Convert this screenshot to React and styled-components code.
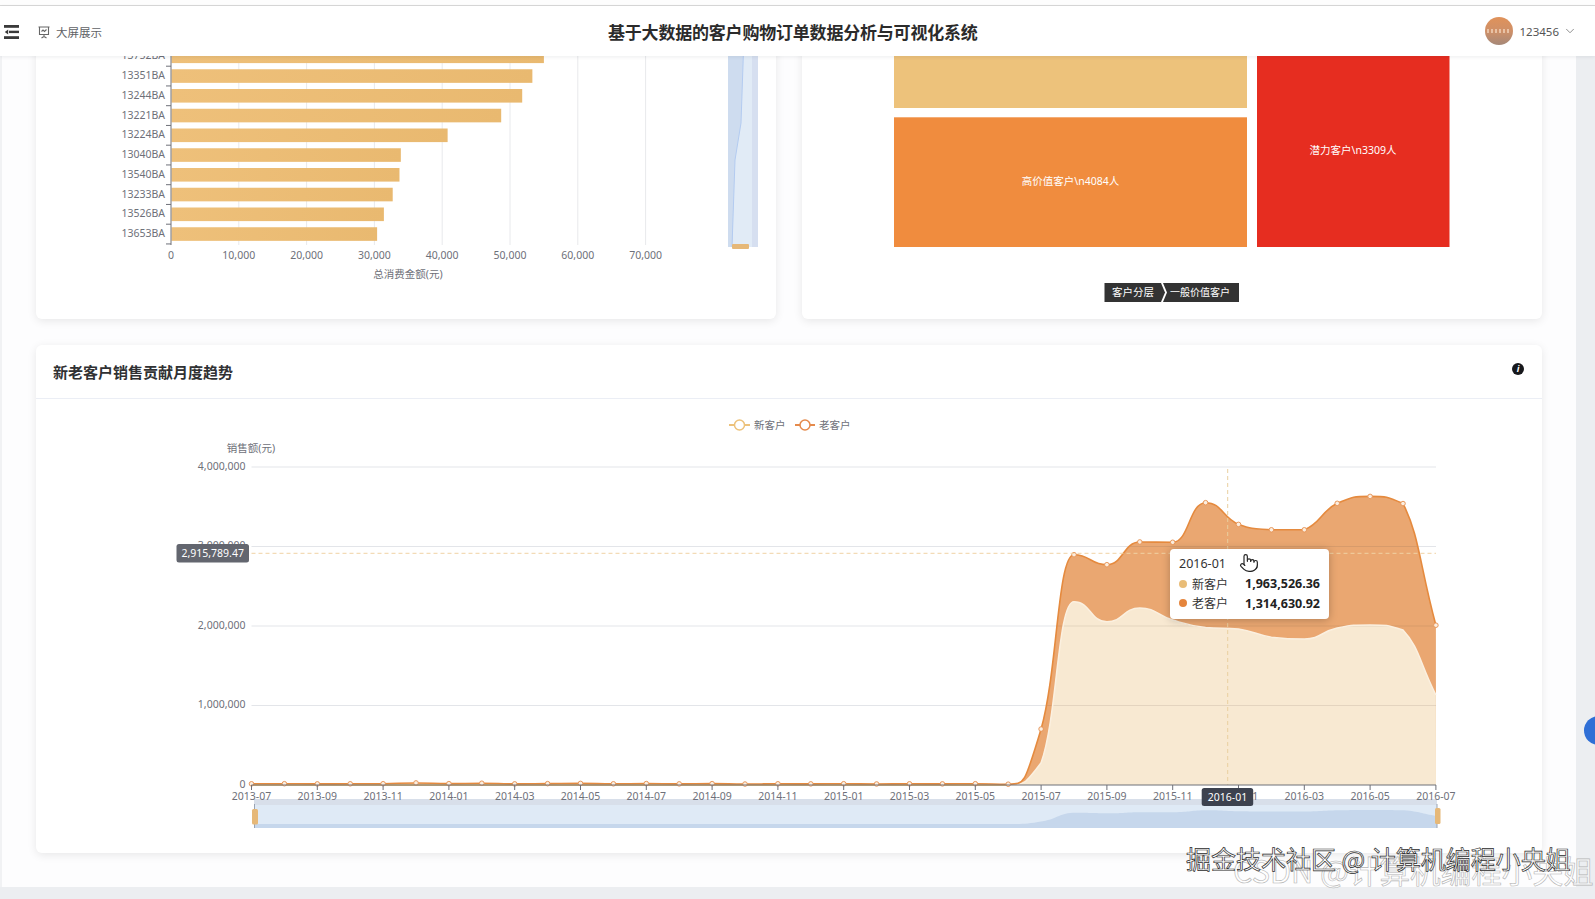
import React from 'react'
import styled, { createGlobalStyle } from 'styled-components'
import { ChevronDown, Pointer } from 'lucide-react'

const GlobalStyle = createGlobalStyle`
  html, body {
    margin: 0;
    padding: 0;
    background: #eceef1;
  }
  * {
    box-sizing: border-box;
  }
  body {
    font-family: "Noto Sans", "Noto Sans CJK SC", sans-serif;
    color: #303133;
  }
`

const Page = styled.div`
  position: relative;
  width: 1595px;
  height: 899px;
  overflow: hidden;
  background: #eceef1;
  display: flex;
  flex-direction: column;
`

const TopStrip = styled.div`
  height: 6px;
  background: #fdfdfd;
  border-bottom: 1px solid #d9d9d9;
`

const Header = styled.header`
  position: relative;
  z-index: 2;
  height: 50px;
  background: #fff;
  box-shadow: 0 1px 4px rgba(0, 21, 41, 0.08);
  display: grid;
  grid-template-columns: 608px auto 1fr;
  align-items: center;
`

const HeaderLeft = styled.div`
  display: flex;
  align-items: center;
  padding: 2px 0 0 4px;
`

const Present = styled.div`
  display: flex;
  align-items: center;
  gap: 6px;
  margin-left: 19px;
  font-size: 11.5px;
  color: #606266;
`

const Title = styled.h1`
  margin: 0;
  font-size: 17px;
  letter-spacing: -0.2px;
  font-weight: 700;
  color: #2b2b2b;
`

const UserBox = styled.div`
  display: flex;
  align-items: center;
  justify-content: flex-end;
  padding-right: 18px;
  font-size: 11.5px;
  color: #555;
  svg {
    margin-left: 4px;
    color: #777;
  }
`

const Avatar = styled.div`
  position: relative;
  width: 28px;
  height: 28px;
  margin-right: 7px;
  border-radius: 50%;
  background: linear-gradient(180deg, #e0925a 0%, #cf9068 50%, #a58878 100%);
  &::after {
    content: '';
    position: absolute;
    left: 2px;
    right: 2px;
    top: 12px;
    height: 4px;
    background: repeating-linear-gradient(90deg, rgba(255, 235, 215, 0.55) 0 2px, transparent 2px 4px);
  }
`

const Body = styled.div`
  flex: 1;
  display: flex;
  min-height: 0;
`

const Main = styled.main`
  width: 1576px;
  height: 831px;
  overflow: hidden;
  background: #fdfdfe;
  padding: 0 34px 0 36px;
  border-left: 2px solid #f1f2f4;
`

const Row = styled.div`
  display: grid;
  grid-template-columns: 740px 740px;
  gap: 26px;
  margin-top: -20px;
  margin-left: -2px;
`

const Card = styled.section`
  background: #fff;
  border-radius: 6px;
  box-shadow: 0 2px 10px rgba(0, 0, 0, 0.09);
  height: ${p => p.$height}px;
  overflow: hidden;
`

const WideCard = styled(Card)`
  margin: 26px 0 0 -2px;
  width: 1506px;
`

const CardHead = styled.div`
  height: 54px;
  padding: 0 18px 0 17px;
  border-bottom: 1px solid #ebeef5;
  display: flex;
  align-items: center;
  justify-content: space-between;
`

const CardTitle = styled.h2`
  margin: 0 0 1px;
  font-size: 15px;
  font-weight: 700;
  color: #303133;
`

const InfoDot = styled.span`
  width: 12px;
  height: 12px;
  margin-bottom: 6px;
  border-radius: 50%;
  background: #17181c;
  color: #fff;
  font-size: 9px;
  font-weight: 700;
  font-style: italic;
  line-height: 12px;
  text-align: center;
`

const ChartBox = styled.div`
  position: relative;
  height: 454px;
`

const ChartSvg = styled.svg`
  display: block;
`

const AxisText = styled.text`
  font-family: "Noto Sans", "Noto Sans CJK SC", sans-serif;
  font-size: ${p => p.$size || 10.5}px;
  fill: #6e7079;
  text-anchor: ${p => p.$anchor || 'middle'};
  dominant-baseline: central;
`

const LightText = styled(AxisText)`
  fill: #fff;
`

const Tooltip = styled.div`
  position: absolute;
  left: 1134px;
  top: 150px;
  width: 159px;
  height: 70px;
  padding: 6px 9px 0 9px;
  background: #fff;
  border-radius: 4px;
  box-shadow: 0 1px 8px rgba(0, 0, 0, 0.25);
  color: #333;
`

const TipDate = styled.div`
  font-size: 12.5px;
  line-height: 18px;
  margin-bottom: 1px;
`

const TipRow = styled.div`
  display: flex;
  align-items: center;
  height: 19.5px;
  font-size: 12px;
`

const TipDot = styled.i`
  width: 8px;
  height: 8px;
  margin-right: 5px;
  border-radius: 50%;
  background: ${p => p.$color};
`

const TipValue = styled.b`
  margin-left: auto;
  font-size: 12.5px;
  font-weight: 700;
  color: #222;
`

const HandCursor = styled(Pointer)`
  position: absolute;
  left: 1203px;
  top: 154px;
  fill: #fff;
  color: #222;
`

const SideDot = styled.div`
  position: absolute;
  left: 1584px;
  top: 716px;
  width: 29px;
  height: 29px;
  border-radius: 50%;
  background: #2f6fd6;
  z-index: 3;
`

const Watermark = styled.div`
  position: absolute;
  left: ${p => p.$left}px;
  top: ${p => p.$top}px;
  z-index: 4;
  white-space: nowrap;
  font-family: "Noto Sans CJK SC", "Noto Sans", sans-serif;
  font-size: ${p => p.$size}px;
  line-height: 1;
  color: ${p => p.$color};
  -webkit-text-stroke: ${p => p.$stroke};
`

// 客户消费排行，数值从截图上量出来的
const rankRows = [
  ['13752BA', 55000],
  ['13351BA', 53300],
  ['13244BA', 51800],
  ['13221BA', 48700],
  ['13224BA', 40800],
  ['13040BA', 33900],
  ['13540BA', 33700],
  ['13233BA', 32700],
  ['13526BA', 31400],
  ['13653BA', 30400],
]
const rankTicks = [0, 10000, 20000, 30000, 40000, 50000, 60000, 70000]
const rankX = v => 171 + v * 0.00678
const rankY = i => 56.3 + i * 19.75

const RankChart = () => (
  <ChartSvg width="740" height="283" viewBox="36 36 740 283">
    <defs>
      <linearGradient id="barFill" x1="0" x2="1" y1="0" y2="0">
        <stop offset="0" stopColor="#eec07a" />
        <stop offset="1" stopColor="#e9b970" />
      </linearGradient>
    </defs>
    {rankTicks.slice(1).map(t => (
      <line key={t} x1={rankX(t)} x2={rankX(t)} y1="36" y2="245" stroke="#e8e9ec" />
    ))}
    {rankRows.map(([name, v], i) => (
      <g key={name}>
        <rect x="171.5" y={rankY(i) - 6.8} width={rankX(v) - 171.5} height="13.6" fill="url(#barFill)" />
        <AxisText $anchor="end" x="165" y={rankY(i) - 1}>{name}</AxisText>
        <line x1="166" x2="171" y1={rankY(i) + 9.9} y2={rankY(i) + 9.9} stroke="#6e7079" />
      </g>
    ))}
    <line x1="171" x2="171" y1="36" y2="245" stroke="#6e7079" />
    {rankTicks.map(t => (
      <AxisText key={t} x={rankX(t)} y="255">{t.toLocaleString('en-US')}</AxisText>
    ))}
    <AxisText x="408" y="274">总消费金额(元)</AxisText>

    <rect x="728" y="36" width="30" height="211" fill="#d6dff0" />
    <rect x="733" y="36" width="19" height="211" fill="#e1ebf6" />
    <path d="M728 36H744L741 123L735 160L732 247H728Z" fill="#cedcef" />
    <path d="M744 36L741 123L735 160L732 247" fill="none" stroke="#b3cbf0" />
    <rect x="732" y="244" width="17" height="5" rx="1" fill="#e6b878" />
  </ChartSvg>
)

const SegmentChart = () => (
  <ChartSvg width="740" height="283" viewBox="802 36 740 283">
    <rect x="894" y="36" width="353" height="72" fill="#edc27b" />
    <rect x="894" y="117.3" width="353" height="129.7" fill="#f08c3e" />
    <rect x="1257" y="36" width="192.5" height="211" fill="#e62d20" />
    <LightText x="1070.5" y="181">高价值客户\n4084人</LightText>
    <LightText x="1353" y="149.5">潜力客户\n3309人</LightText>
    <path d="M1104.5 283H1161L1165 292.5L1161 302H1104.5Z" fill="#333" />
    <path d="M1163 283H1239V302H1163L1167 292.5Z" fill="#333" />
    <LightText x="1133" y="291.5">客户分层</LightText>
    <LightText $size={10} x="1200" y="291.5">一般价值客户</LightText>
  </ChartSvg>
)

const lowTotal = [15, 16, 14, 15, 16, 26, 17, 22, 14, 17, 20, 15, 18, 14, 17, 12, 15, 14, 16, 13, 15, 14, 16]
const totals = [
  ...lowTotal.map(v => v * 1000),
  10000, 704000, 2897000, 2771000, 3057000, 3053000, 3551000,
  3278000, 3210000, 3210000, 3543000, 3630000, 3540000, 2010000,
]
const newOnes = [
  ...lowTotal.map(v => v * 500),
  4000, 280000, 2306000, 2054000, 2226000, 2075000, 1980000,
  1963526, 1860000, 1836000, 1975000, 2013000, 1950000, 1132000,
]
const monthX = i => 251.5 + i * 32.9
const saleY = v => 785 - v * 0.0000795

const clamp = (v, a, b) => Math.min(Math.max(a, b), Math.max(Math.min(a, b), v))

// 和 echarts 的 smooth 差不多，拐点处切线放平
const smoothLine = pts => {
  let d = `M${pts[0][0]} ${pts[0][1]}`
  const slope = i => {
    const a = pts[i - 1] || pts[i]
    const b = pts[i + 1] || pts[i]
    if ((pts[i][1] - a[1]) * (b[1] - pts[i][1]) < 0) return 0
    return (b[1] - a[1]) / (b[0] - a[0])
  }
  for (let i = 0; i < pts.length - 1; i++) {
    const [x1, y1] = pts[i]
    const [x2, y2] = pts[i + 1]
    const half = (x2 - x1) / 2
    const c1 = clamp(y1 + slope(i) * half, y1, y2)
    const c2 = clamp(y2 - slope(i + 1) * half, y1, y2)
    d += `C${x1 + half} ${c1} ${x2 - half} ${c2} ${x2} ${y2}`
  }
  return d
}

const totalPts = totals.map((v, i) => [monthX(i), saleY(v)])
const newPts = newOnes.map((v, i) => [monthX(i), saleY(v)])
const totalLine = smoothLine(totalPts)
const newLine = smoothLine(newPts)
const closeArea = line => `${line}L1436 785L251.5 785Z`

const sliderX = i => 254 + i * 32.86
const sliderPts = totals.map((v, i) => [sliderX(i), 824 - (v / 3630000) * 14])
const sliderLine = smoothLine(sliderPts)

const monthLabels = Array.from({ length: 19 }, (_, i) => {
  const m = 6 + i * 2
  return `${2013 + Math.floor(m / 12)}-${String((m % 12) + 1).padStart(2, '0')}`
})

const TrendChart = () => (
  <ChartSvg width="1506" height="454" viewBox="36 399 1506 454">
    <defs>
      <clipPath id="areaClip">
        <path d={closeArea(totalLine)} />
      </clipPath>
    </defs>
    <line x1="729" x2="750" y1="425" y2="425" stroke="#edc27b" strokeWidth="2" />
    <circle cx="739.5" cy="425" r="5" fill="#fff" stroke="#edc27b" strokeWidth="1.5" />
    <AxisText $anchor="start" x="754" y="425">新客户</AxisText>
    <line x1="795" x2="815" y1="425" y2="425" stroke="#e58a4c" strokeWidth="2" />
    <circle cx="805" cy="425" r="5" fill="#fff" stroke="#e58a4c" strokeWidth="1.5" />
    <AxisText $anchor="start" x="819" y="425">老客户</AxisText>

    <AxisText x="251" y="447.5">销售额(元)</AxisText>
    {[4, 3, 2, 1].map(m => (
      <line key={m} x1="251.5" x2="1436" y1={saleY(m * 1000000)} y2={saleY(m * 1000000)} stroke="#e3e5e9" />
    ))}
    {[4, 3, 2, 1, 0].map(m => (
      <AxisText key={m} $anchor="end" x="245.5" y={saleY(m * 1000000) - 1.5}>
        {(m * 1000000).toLocaleString('en-US')}
      </AxisText>
    ))}

    <path d={closeArea(totalLine)} fill="#eaa771" />
    <path d={closeArea(newLine)} fill="#f8e9d2" />
    <g clipPath="url(#areaClip)">
      {[3, 2, 1].map(m => (
        <line key={m} x1="1000" x2="1436" y1={saleY(m * 1000000)} y2={saleY(m * 1000000)} stroke="rgba(90,80,70,0.13)" />
      ))}
    </g>
    <path d={newLine} fill="none" stroke="#fbf0e0" strokeWidth="1.5" />
    <line x1="251.5" x2="1008" y1="785" y2="785" stroke="#edc27b" strokeWidth="2" />
    <path d={totalLine} fill="none" stroke="#e58a3e" strokeWidth="1.6" />
    {totalPts.map(([x, y]) => (
      <circle key={x} cx={x} cy={y} r="2.3" fill="#fbeee0" stroke="#e8985c" />
    ))}

    <line x1="251.5" x2="1436" y1="553.3" y2="553.3" stroke="#f0d2a4" strokeDasharray="4 3" />
    <line x1="1227.7" x2="1227.7" y1="469" y2="785" stroke="#e9cf9f" strokeDasharray="4 3" />

    <rect x="254" y="799" width="1183" height="29" fill="#dfeaf6" />
    <rect x="254" y="799" width="1183" height="6" fill="#d8dfea" />
    <path d={`${sliderLine}L1437 828L254 828Z`} fill="#c6d7ec" />
    <line x1="254.5" x2="254.5" y1="804" y2="828" stroke="#9aa3b2" />
    <line x1="1437" x2="1437" y1="804" y2="828" stroke="#9aa3b2" />
    <rect x="252" y="809" width="6" height="15.5" rx="1.5" fill="#e6b878" />
    <rect x="1435" y="808" width="5.5" height="16" rx="1.5" fill="#e6b878" />

    <line x1="251.5" x2="1436" y1="785" y2="785" stroke="#6e7079" />
    {monthLabels.map((label, i) => (
      <g key={label}>
        <line x1={monthX(i * 2)} x2={monthX(i * 2)} y1="785" y2="790" stroke="#6e7079" />
        <AxisText x={monthX(i * 2)} y="796">{label}</AxisText>
      </g>
    ))}

    <rect x="176.5" y="544" width="72.5" height="18.5" rx="2.5" fill="#63666f" />
    <LightText x="212.7" y="552.5">2,915,789.47</LightText>
    <rect x="1201.7" y="788" width="51.5" height="18" rx="2.5" fill="#3d424f" />
    <LightText x="1227.5" y="796.5">2016-01</LightText>
  </ChartSvg>
)

const App = () => (
  <Page>
    <GlobalStyle />
    <TopStrip />
    <Header>
      <HeaderLeft>
        <svg width="15" height="14" viewBox="0 0 15 14">
          <rect x="0" y="0" width="15" height="2.8" fill="#3a3a3a" />
          <rect x="5" y="5.7" width="10" height="2.4" fill="#3a3a3a" />
          <path d="M4.2 4.4L0.8 6.9L4.2 9.4Z" fill="#3a3a3a" />
          <rect x="0" y="11.2" width="15" height="2.8" fill="#3a3a3a" />
        </svg>
        <Present>
          <svg width="12" height="13" viewBox="0 0 12 13" fill="none" stroke="#666" strokeWidth="1.1">
            <path d="M0.5 1H11.5M1.5 1V8.5H10.5V1M6 8.5V10.5M3.5 12L6 10.5L8.5 12" />
            <path d="M3.5 5.5L5 4L6.5 5.5L8.5 3.5" />
          </svg>
          大屏展示
        </Present>
      </HeaderLeft>
      <Title>基于大数据的客户购物订单数据分析与可视化系统</Title>
      <UserBox>
        <Avatar />
        123456
        <ChevronDown size={14} strokeWidth={1.4} />
      </UserBox>
    </Header>
    <Body>
      <Main>
        <Row>
          <Card $height={283}>
            <RankChart />
          </Card>
          <Card $height={283}>
            <SegmentChart />
          </Card>
        </Row>
        <WideCard $height={508}>
          <CardHead>
            <CardTitle>新老客户销售贡献月度趋势</CardTitle>
            <InfoDot>i</InfoDot>
          </CardHead>
          <ChartBox>
            <TrendChart />
            <Tooltip>
              <TipDate>2016-01</TipDate>
              <TipRow>
                <TipDot $color="#e9bd78" />
                新客户
                <TipValue>1,963,526.36</TipValue>
              </TipRow>
              <TipRow>
                <TipDot $color="#e5853d" />
                老客户
                <TipValue>1,314,630.92</TipValue>
              </TipRow>
            </Tooltip>
            <HandCursor size={20} strokeWidth={1.4} />
          </ChartBox>
        </WideCard>
      </Main>
    </Body>
    <SideDot />
    <Watermark $left={1233} $top={855} $size={30.6} $color="rgba(255,255,255,0.5)" $stroke="0.6px #b4b4b4">
      CSDN @计算机编程小央姐
    </Watermark>
    <Watermark $left={1186} $top={846} $size={25} $color="#fff" $stroke="0.7px #2a2a2a">
      掘金技术社区 @ 计算机编程小央姐
    </Watermark>
  </Page>
)

export default App
